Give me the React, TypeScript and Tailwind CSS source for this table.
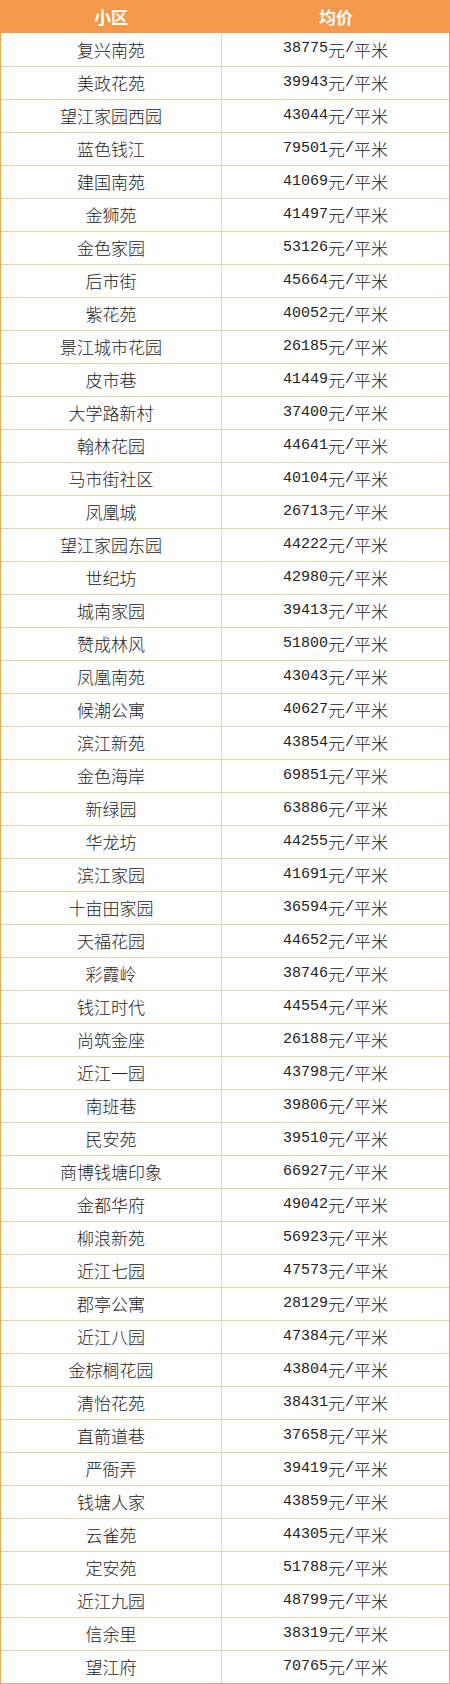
const rows: [string, string][] = [
  ['复兴南苑', '38775'],
  ['美政花苑', '39943'],
  ['望江家园西园', '43044'],
  ['蓝色钱江', '79501'],
  ['建国南苑', '41069'],
  ['金狮苑', '41497'],
  ['金色家园', '53126'],
  ['后市街', '45664'],
  ['紫花苑', '40052'],
  ['景江城市花园', '26185'],
  ['皮市巷', '41449'],
  ['大学路新村', '37400'],
  ['翰林花园', '44641'],
  ['马市街社区', '40104'],
  ['凤凰城', '26713'],
  ['望江家园东园', '44222'],
  ['世纪坊', '42980'],
  ['城南家园', '39413'],
  ['赞成林风', '51800'],
  ['凤凰南苑', '43043'],
  ['候潮公寓', '40627'],
  ['滨江新苑', '43854'],
  ['金色海岸', '69851'],
  ['新绿园', '63886'],
  ['华龙坊', '44255'],
  ['滨江家园', '41691'],
  ['十亩田家园', '36594'],
  ['天福花园', '44652'],
  ['彩霞岭', '38746'],
  ['钱江时代', '44554'],
  ['尚筑金座', '26188'],
  ['近江一园', '43798'],
  ['南班巷', '39806'],
  ['民安苑', '39510'],
  ['商博钱塘印象', '66927'],
  ['金都华府', '49042'],
  ['柳浪新苑', '56923'],
  ['近江七园', '47573'],
  ['郡亭公寓', '28129'],
  ['近江八园', '47384'],
  ['金棕榈花园', '43804'],
  ['清怡花苑', '38431'],
  ['直箭道巷', '37658'],
  ['严衙弄', '39419'],
  ['钱塘人家', '43859'],
  ['云雀苑', '44305'],
  ['定安苑', '51788'],
  ['近江九园', '48799'],
  ['信余里', '38319'],
  ['望江府', '70765'],
];

export default function App() {
  return (
    <div className="w-[450px] bg-white font-['Noto_Sans_CJK_SC',sans-serif]">
      {/* header */}
      <div className="grid grid-cols-[222px_1fr] h-[33px] bg-[#f4994b] text-white font-bold text-[17px]">
        <div className="flex items-center justify-center">小区</div>
        <div className="flex items-center justify-center">均价</div>
      </div>

      {/* body */}
      <div className="border-x border-b border-[#f2a35c]">
        {rows.map(([name, price], i) => (
          <div
            key={name}
            className={`grid grid-cols-[221px_1fr] h-[33px] text-[#222] text-[17px] font-light ${i > 0 ? 'border-t border-[#ead2ae]' : ''}`}
          >
            <div className="flex items-center justify-center border-r border-[#d8d8d8]">{name}</div>
            <div className="flex items-center justify-center">
              <span className="font-['Liberation_Mono',monospace] text-[15px]">{price}</span>
              <span>元</span>
              <span className="font-['Liberation_Mono',monospace] text-[15px]">/</span>
              <span>平米</span>
            </div>
          </div>
        ))}
      </div>
    </div>
  );
}
